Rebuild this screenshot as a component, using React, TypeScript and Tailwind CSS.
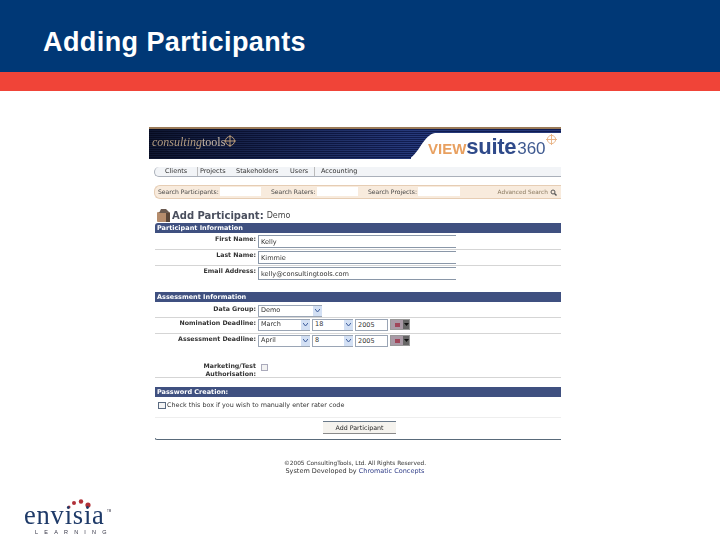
import React from "react";

const Bar = ({ children, className = "" }: { children: React.ReactNode; className?: string }) => (
  <div className={`h-[10px] bg-[#3f5080] text-white text-[6.5px] leading-[10px] font-bold pl-[2px] ${className}`}>{children}</div>
);

const Sel = ({ w, v }: { w: string; v: string }) => (
  <div className={`${w} h-[12px] flex items-center justify-between border-t border-l border-b border-[#9aa5b5] bg-white pl-[2px] text-[6.5px] text-[#333]`}>
    <span>{v}</span>
    <span className="w-[9px] h-[10px] bg-[#d3e0f4] flex items-center justify-center">
      <svg width="5" height="4" viewBox="0 0 5 4"><path d="M0 0L2.5 3L5 0" fill="none" stroke="#3a5a9a" strokeWidth="1" /></svg>
    </span>
  </div>
);

const Row = ({ label, h, children, line = true }: { label: React.ReactNode; h: string; children?: React.ReactNode; line?: boolean }) => (
  <div className={`${h} flex ${line ? "border-b border-[#d5d5d5]" : ""}`}>
    <div className="w-[101px] text-right text-[6.25px] leading-[7.5px] font-bold text-[#333] whitespace-nowrap">{label}</div>
    <div className="ml-[2px] flex gap-[2px] items-start">{children}</div>
  </div>
);

const TextInput = ({ v }: { v: string }) => (
  <div className="w-[198px] h-[13px] border-l border-t border-b border-[#8a97a8] bg-white pl-[2px] text-[6.6px] leading-[12px] text-[#333]">{v}</div>
);

const Cal = () => (
  <div className="w-[20px] h-[11px] flex border border-[#999] bg-[#888]">
    <div className="w-[12px] bg-[#a99aa6] flex items-center justify-center">
      <div className="w-[5px] h-[4px] bg-[#a0465a]" />
    </div>
    <div className="flex-1 bg-[#666] flex items-center justify-center">
      <svg width="5" height="3" viewBox="0 0 5 3"><path d="M0 0H5L2.5 3Z" fill="#111" /></svg>
    </div>
  </div>
);

const DateRow = ({ m, d, y }: { m: string; d: string; y: string }) => (
  <>
    <Sel w="w-[52px]" v={m} />
    <Sel w="w-[41px]" v={d} />
    <div className="w-[33px] h-[12px] border border-[#9aa5b5] bg-white pl-[2px] text-[6.5px] leading-[11px] text-[#333]">{y}</div>
    <Cal />
  </>
);

const Search = ({ label, w, input }: { label: string; w: string; input: string }) => (
  <div className={`${w} flex items-center`}>
    <span className="text-[6.1px] text-[#444] whitespace-nowrap">{label}</span>
    <span className={`${input} h-[9px] bg-white ml-[1px]`} />
  </div>
);

export default function App() {
  return (
    <div className="w-[720px] h-[540px] bg-white overflow-hidden flex flex-col font-['Liberation_Sans',sans-serif]">
      <div className="h-[72px] bg-[#003876] pl-[43px] pt-[25px] text-white font-bold text-[27px] leading-[34px] tracking-[0.42px]">Adding Participants</div>
      <div className="h-[19px] bg-[#f04438]" />

      <div className="ml-[149px] mt-[36px] w-[412px] h-[355px] flex flex-col blur-[0.4px] font-['DejaVu_Sans',sans-serif]">
        {/* banner */}
        <div className="h-[32px] relative border-t-[2px] border-[#9a7a58] overflow-hidden bg-[repeating-linear-gradient(180deg,#101c50_0px,#101c50_1px,#26397a_1px,#26397a_2px)]">
          <div className="absolute inset-y-0 left-0 w-[260px] bg-gradient-to-r from-black/60 to-transparent" />
          <svg className="absolute right-0 top-0" width="150" height="30" viewBox="0 0 150 30">
            <path d="M-3 30C8 26 12 6 24 4L150 4V30Z" fill="#ffffff" />
          </svg>
          <span className="absolute left-[3px] top-[6px] text-[12px] leading-[15px] text-[#c9b9a8] font-['Liberation_Serif',serif]"><i className="text-[#b09a80]">consulting</i>tools</span>
          <svg className="absolute left-[75px] top-[6px]" width="12" height="12" viewBox="0 0 12 12">
            <circle cx="6" cy="6" r="4.5" fill="none" stroke="#b89a78" /><path d="M6 0V12M0 6H12" stroke="#b89a78" />
          </svg>
          <div className="absolute left-[279px] top-[8px] flex items-baseline font-['Liberation_Sans',sans-serif] leading-[20px]">
            <span className="text-[15px] font-bold text-[#e8a060]">VIEW</span>
            <span className="text-[22px] font-bold text-[#2f4a8a] tracking-[-0.3px]">suite</span>
            <span className="text-[17px] text-[#3f5a90] ml-[1px]">360</span>
          </div>
          <svg className="absolute left-[397px] top-[5px]" width="11" height="11" viewBox="0 0 12 12">
            <circle cx="6" cy="6" r="4.5" fill="none" stroke="#e8b080" /><path d="M6 0V12M0 6H12" stroke="#e8b080" />
          </svg>
        </div>

        {/* nav */}
        <div className="mt-[8px] ml-[5px] h-[10px] rounded-l-[5px] border-l border-b border-[#aab0ba] bg-[#f2f4f7] flex items-center text-[6.5px] text-[#333] pl-[10px]">
          <span className="w-[32px]">Clients</span>
          <span className="w-[39px] border-l border-[#bbb] pl-[2px]">Projects</span>
          <span className="w-[54px]">Stakeholders</span>
          <span className="w-[24px]">Users</span>
          <span className="border-l border-[#bbb] pl-[6px]">Accounting</span>
        </div>

        {/* search */}
        <div className="mt-[8px] ml-[5px] h-[14px] rounded-l-[6px] border-l border-[#e6cdb4] border-t border-b bg-[#f8ebdd] flex items-center pl-[3px] pr-[4px]">
          <Search label="Search Participants:" w="w-[113px]" input="w-[41px]" />
          <Search label="Search Raters:" w="w-[97px]" input="w-[41px]" />
          <Search label="Search Projects:" w="w-[103px]" input="w-[42px]" />
          <span className="ml-auto flex items-center gap-[2px] text-[5.8px] text-[#8a7a60] whitespace-nowrap">Advanced Search
            <svg width="7" height="7" viewBox="0 0 7 7"><circle cx="3" cy="3" r="2" fill="none" stroke="#555" /><path d="M4.5 4.5L6.5 6.5" stroke="#555" strokeWidth="1.4" /></svg>
          </span>
        </div>

        {/* title */}
        <div className="mt-[10px] h-[14px] flex items-center ml-[8px]">
          <svg width="14" height="13" viewBox="0 0 14 13" className="mr-[1px] -mt-[2px]">
            <rect x="0" y="3" width="13" height="10" rx="1" fill="#b58c6c" />
            <path d="M2 4L4 0H9L13 4" fill="#6a5a50" />
            <rect x="9" y="4" width="4" height="9" fill="#5a4638" />
          </svg>
          <span className="text-[10px] leading-[12px] font-bold text-[#4a4f5e]">Add Participant:</span>
          <span className="text-[8px] text-[#444] ml-[3px]">Demo</span>
        </div>

        <div className="ml-[6px] flex flex-col">
          <Bar className="rounded-tl-[3px]">Participant Information</Bar>
          <div className="h-[2px]" />
          <Row h="h-[15px]" label="First Name:"><TextInput v="Kelly" /></Row>
          <div className="h-[1px]" />
          <Row h="h-[15px]" label="Last Name:"><TextInput v="Kimmie" /></Row>
          <div className="h-[1px]" />
          <Row h="h-[13px]" line={false} label="Email Address:"><TextInput v="kelly@consultingtools.com" /></Row>
          <div className="h-[12px]" />
          <Bar>Assessment Information</Bar>
          <div className="h-[3px]" />
          <Row h="h-[13px]" label="Data Group:"><Sel w="w-[64px]" v="Demo" /></Row>
          <div className="h-[1px]" />
          <Row h="h-[15px]" label="Nomination Deadline:"><DateRow m="March" d="18" y="2005" /></Row>
          <div className="h-[1px]" />
          <Row h="h-[13px]" line={false} label="Assessment Deadline:"><DateRow m="April" d="8" y="2005" /></Row>
          <div className="h-[13px]" />
          <Row h="h-[17px]" label={<div className="mt-[1px]">Marketing/Test<br />Authorisation:</div>}>
            <div className="w-[7px] h-[7px] mt-[3px] ml-[3px] border border-[#aab] bg-[#f2f2f2]" />
          </Row>
          <div className="h-[9px]" />
          <Bar>Password Creation:</Bar>
          <div className="h-[4px]" />
          <div className="h-[17px] flex pl-[3px] items-start border-b border-[#eee]">
            <div className="w-[8px] h-[7px] mt-[1px] border border-[#5a6a80] bg-[#f4f4f4]" />
            <span className="ml-[1px] text-[6.4px] leading-[9px] text-[#333]">Check this box if you wish to manually enter rater code</span>
          </div>
          <div className="h-[3px]" />
          <div className="self-start ml-[168px] w-[73px] h-[13px] border-t border-[#6a7a8a] border-b border-b-[#8a8a8a] bg-[#f5f3ee] text-center text-[6.3px] leading-[11px] text-[#222]">Add Participant</div>
          <div className="h-[4px]" />
          <div className="h-[2px] border-b border-[#596a7a] rounded-bl-[3px] border-l" />
        </div>

        <div className="mt-[19px] text-center text-[#333] flex flex-col">
          <span className="text-[5.8px] leading-[8px]">©2005 ConsultingTools, Ltd. All Rights Reserved.</span>
          <span className="text-[6.5px] leading-[8px]">System Developed by <span className="text-[#33408a]">Chromatic Concepts</span></span>
        </div>
      </div>

      {/* logo */}
      <div className="relative flex-1">
        <svg className="absolute left-[64px] top-[16px]" width="30" height="16" viewBox="0 0 30 16">
          <circle cx="5" cy="9" r="1.5" fill="#b03038" />
          <circle cx="10" cy="5" r="2" fill="#b03038" />
          <circle cx="17" cy="3.5" r="2.2" fill="#b03038" />
          <circle cx="24" cy="7" r="2.6" fill="#b03038" />
        </svg>
        <div className="absolute left-[24px] top-[19px] text-[26.5px] leading-[28px] text-[#1e3a68] font-['Liberation_Serif',serif] tracking-[0.8px] blur-[0.2px]">envisia</div>
        <div className="absolute left-[107px] top-[28px] text-[3px] leading-[3px] text-[#334]">TM</div>
        <div className="absolute left-[35px] top-[47px] text-[5.5px] leading-[6px] text-[#334] font-['Liberation_Sans',sans-serif] tracking-[6.2px] whitespace-nowrap">LEARNING</div>
      </div>
    </div>
  );
}
